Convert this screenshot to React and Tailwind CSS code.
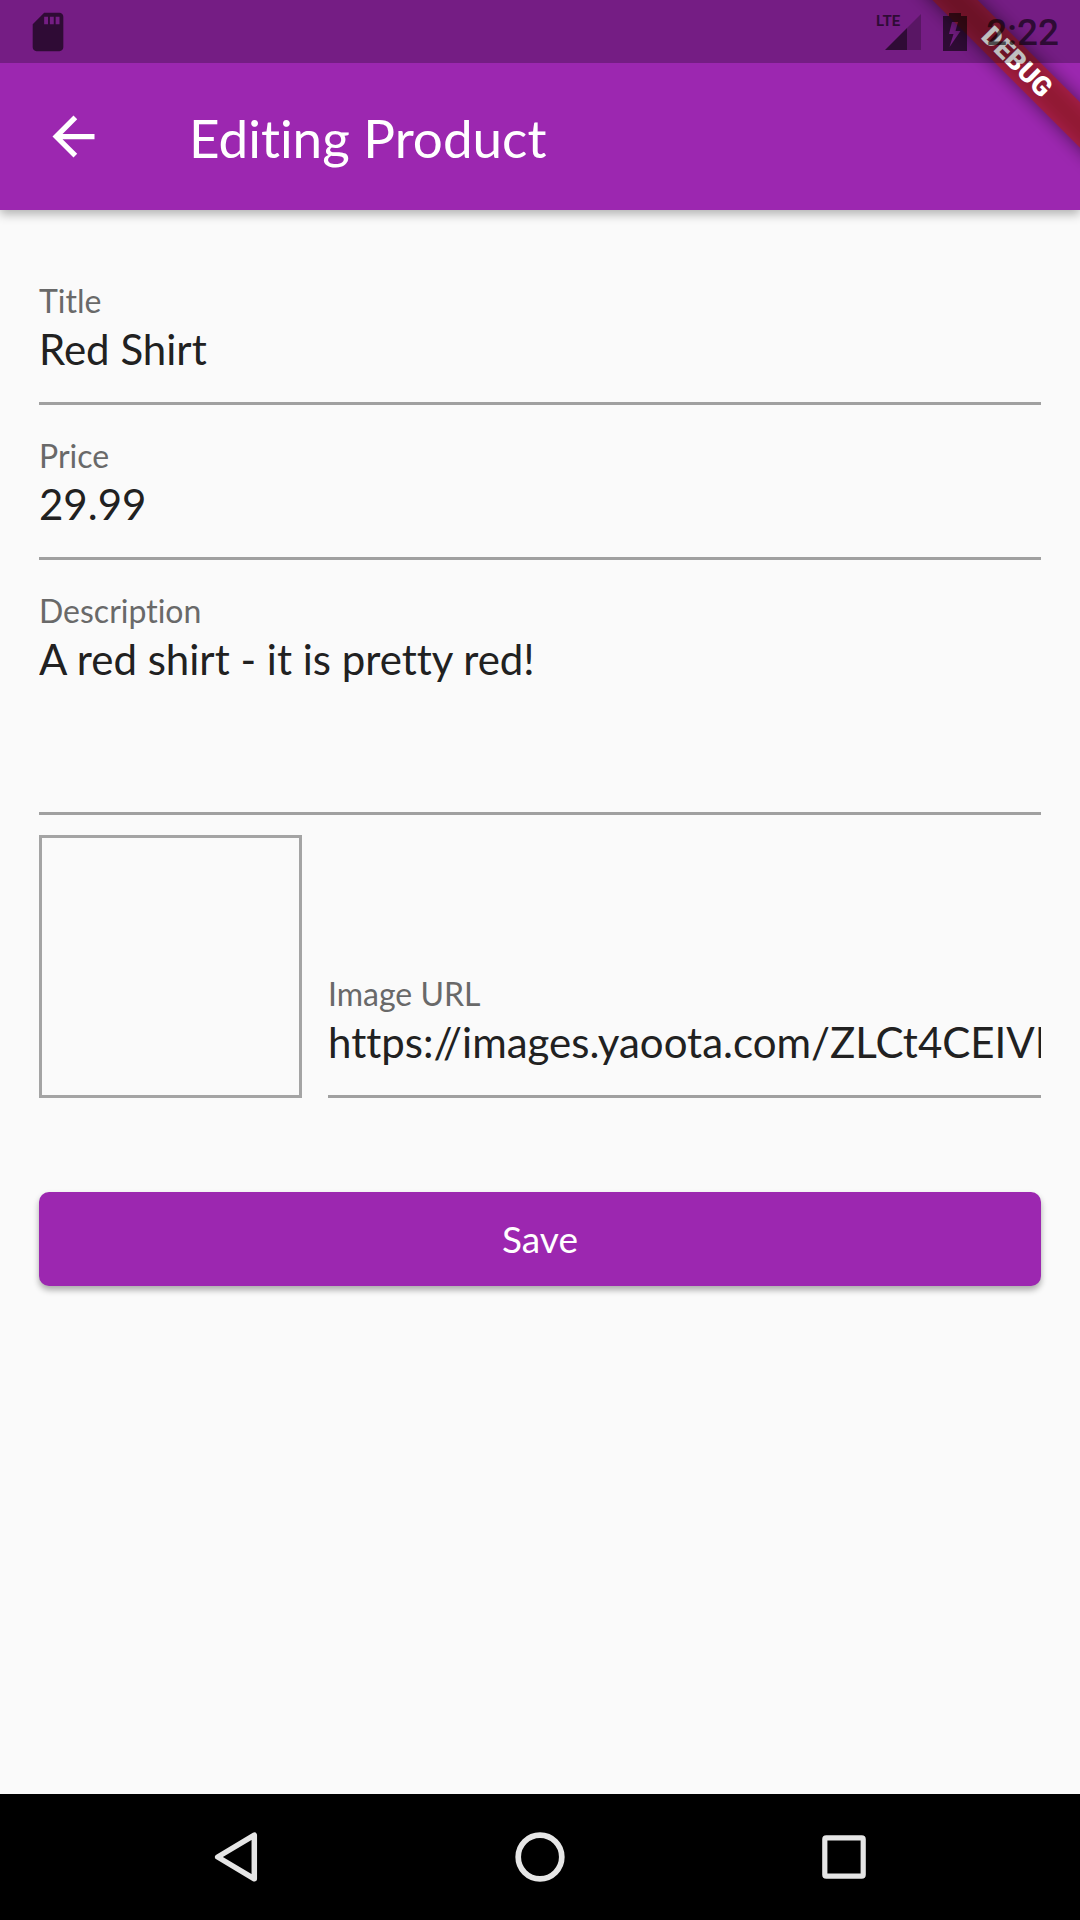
function StatusBar() {
  return (
    <div className="relative z-20 flex h-[63px] items-center justify-between bg-black/25 pr-[21px] pl-[25px] text-black/60">
      <svg viewBox="0 0 24 24" className="size-[46px]" fill="currentColor" aria-label="SD card">
        <path d="M18 2h-8L4.02 8 4 20c0 1.1.9 2 2 2h12c1.1 0 2-.9 2-2V4c0-1.1-.9-2-2-2zm-6 6h-2V4h2v4zm3 0h-2V4h2v4zm3 0h-2V4h2v4z" />
      </svg>
      <div className="flex items-center">
        <span className="self-start font-[Roboto,sans-serif] text-[15px] leading-[24px] font-bold">LTE</span>
        <svg viewBox="0 0 36 36" className="-ml-[15px] h-[36px] w-[36px]" fill="currentColor" aria-label="Signal strength">
          <path d="M22 14V36H0z" />
          <path d="M22 14 36 0V36H22z" opacity="0.4" />
        </svg>
        <svg viewBox="0 0 24 38" className="ml-[22px] h-[38px] w-[24px]" fill="currentColor" aria-label="Battery charging">
          <path fillRule="evenodd" d="M6 0h12v3h6v35H0V3h6zM9 9 6 21h4.5L6.5 34 17.5 18h-5L15 9z" />
        </svg>
        <time className="ml-[19px] pt-[2px] font-[Roboto,sans-serif] text-[37px] leading-[44px] font-medium">2:22</time>
      </div>
    </div>
  );
}

function DebugBanner() {
  return (
    <div className="pointer-events-none absolute top-0 right-0 z-10 size-[210px] overflow-hidden">
      <div className="absolute -top-[64px] -right-[63px] flex size-[252px] items-center justify-center">
        <div className="relative h-[32px] w-[252px] shrink-0 rotate-45">
          <div className="absolute inset-0 bg-black/50 blur-[9px]" />
          <div className="relative flex h-full items-center justify-center bg-[#b71c1c]/63 font-[Roboto,sans-serif] text-[27px] leading-[32px] font-black text-white">
            DEBUG
          </div>
        </div>
      </div>
    </div>
  );
}

const controlClass =
  "mt-[4px] block w-full resize-none overflow-hidden border-0 border-b-[3px] border-[#a0a0a0] bg-transparent p-0 pb-[28px] text-[42px] leading-[50px] text-[#212121] outline-none";

function Field({ id, label, value, rows }) {
  return (
    <div className="min-w-0 flex-1 pt-[32px]">
      <label htmlFor={id} className="block text-[32px] leading-[38px] text-[#696969]">
        {label}
      </label>
      {rows ? (
        <textarea id={id} rows={rows} defaultValue={value} className={controlClass} />
      ) : (
        <input id={id} type="text" defaultValue={value} className={controlClass} />
      )}
    </div>
  );
}

function NavBar() {
  const buttonClass = "flex h-full items-center justify-center";
  return (
    <nav className="grid h-[126px] grid-cols-3 bg-black px-[84px] text-[#e6e6e6]">
      <button type="button" aria-label="Back" className={buttonClass}>
        <svg viewBox="0 0 50 50" className="size-[50px]" fill="none" stroke="currentColor" strokeWidth="5.5" strokeLinejoin="round">
          <path d="M43.3 3.2V46.8L6.7 25z" />
        </svg>
      </button>
      <button type="button" aria-label="Home" className={buttonClass}>
        <svg viewBox="0 0 50 50" className="size-[50px]" fill="none" stroke="currentColor" strokeWidth="5.7">
          <circle cx="25" cy="25" r="21.8" />
        </svg>
      </button>
      <button type="button" aria-label="Recent apps" className={buttonClass}>
        <svg viewBox="0 0 50 50" className="size-[50px]" fill="none" stroke="currentColor" strokeWidth="5.2">
          <rect x="5.8" y="5.8" width="38.4" height="38.4" rx="1.5" />
        </svg>
      </button>
    </nav>
  );
}

export default function App() {
  return (
    <div className="relative flex min-h-screen flex-col bg-[#fafafa] font-[Lato,sans-serif] [font-variant-ligatures:none]">
      <header className="bg-[#9c27b0] text-white shadow-[0_4px_10px_rgba(0,0,0,0.3)]">
        <StatusBar />
        <div className="flex h-[147px] items-center pl-[42px]">
          <button type="button" aria-label="Go back" className="size-[63px]">
            <svg viewBox="0 0 24 24" className="size-full" fill="currentColor">
              <path d="M20 11H7.83l5.59-5.59L12 4l-8 8 8 8 1.41-1.41L7.83 13H20v-2z" />
            </svg>
          </button>
          <h1 className="ml-[84px] pt-[2px] text-[53px] leading-[64px]">Editing Product</h1>
        </div>
      </header>
      <DebugBanner />

      <main className="flex-1 px-[39px] pt-[40px]">
        <form onSubmit={(event) => event.preventDefault()}>
          <Field id="title" label="Title" value="Red Shirt" />
          <Field id="price" label="Price" value="29.99" />
          <Field id="description" label="Description" value="A red shirt - it is pretty red!" rows={3} />
          <div className="mt-[20px] flex items-end gap-[26px]">
            <div className="size-[263px] shrink-0 border-3 border-[#a4a4a4]" />
            <Field id="image-url" label="Image URL" value="https://images.yaoota.com/ZLCt4CEIVI" />
          </div>
          <button
            type="submit"
            className="mt-[94px] block h-[94px] w-full rounded-[10px] bg-[#9c27b0] text-[37px] leading-[44px] text-white shadow-[0_4px_6px_rgba(0,0,0,0.32)]"
          >
            Save
          </button>
        </form>
      </main>

      <NavBar />
    </div>
  );
}
